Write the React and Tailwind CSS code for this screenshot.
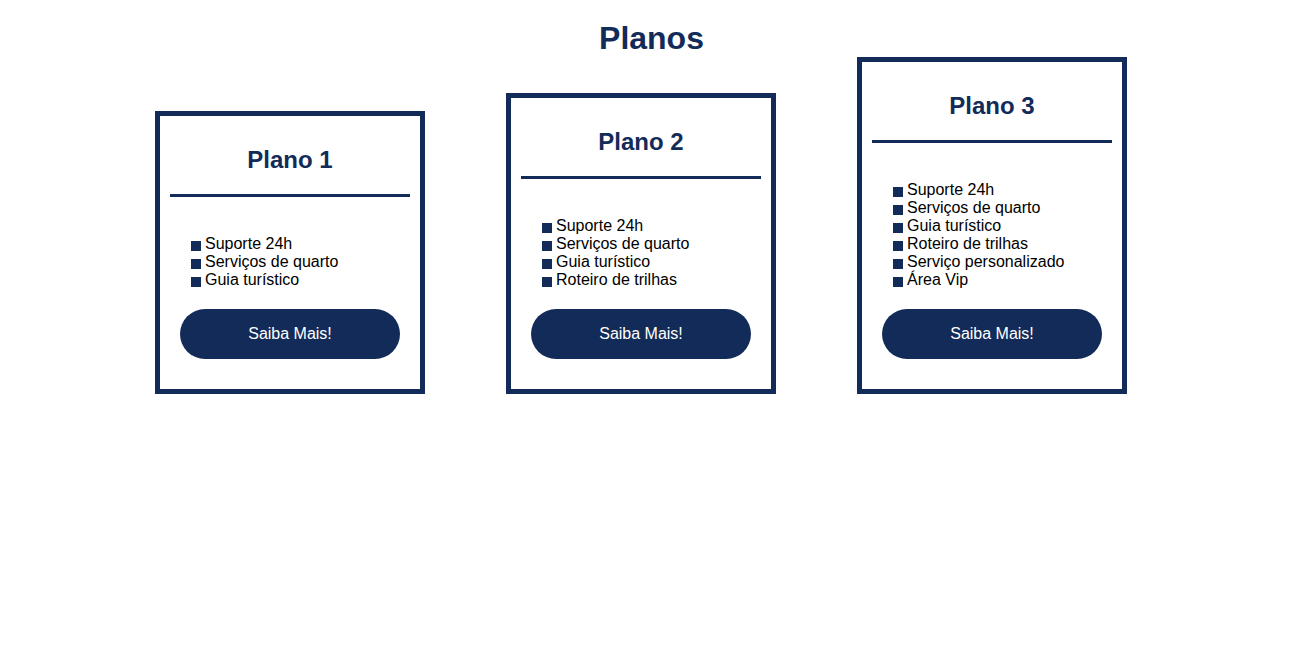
const plans = [
  { name: "Plano 1", items: ["Suporte 24h", "Serviços de quarto", "Guia turístico"] },
  {
    name: "Plano 2",
    items: ["Suporte 24h", "Serviços de quarto", "Guia turístico", "Roteiro de trilhas"],
  },
  {
    name: "Plano 3",
    items: [
      "Suporte 24h",
      "Serviços de quarto",
      "Guia turístico",
      "Roteiro de trilhas",
      "Serviço personalizado",
      "Área Vip",
    ],
  },
];

function PlanCard({ plan }) {
  return (
    <div className="w-[270px] border-[5px] border-[#132b58] bg-white px-[10px] pt-[30px] pb-[30px]">
      <h2 className="text-center text-[24px] leading-[28px] font-bold text-[#132b58]">
        {plan.name}
      </h2>
      <div className="mt-[20px] h-[3px] bg-[#132b58]" />

      <ul className="mt-[38px] pl-[21px]">
        {plan.items.map((item) => (
          <li key={item} className="flex text-[16px] leading-[18px] text-black">
            <span className="mt-[6px] mr-[4px] h-[10px] w-[10px] shrink-0 bg-[#132b58]" />
            {item}
          </li>
        ))}
      </ul>

      <button className="mx-[10px] mt-[20px] flex h-[50px] w-[220px] items-center justify-center rounded-full bg-[#132b58] text-[16px] text-white">
        Saiba Mais!
      </button>
    </div>
  );
}

export default function App() {
  return (
    <div className="min-h-screen bg-white font-['Liberation_Sans',Arial,sans-serif]">
      <h1 className="pt-[20px] pl-[6px] text-center text-[32px] leading-[36px] font-bold text-[#132b58]">
        Planos
      </h1>

      {/* Cards */}
      <div className="mt-[1px] flex items-end gap-[81px] pl-[155px]">
        {plans.map((plan) => (
          <PlanCard key={plan.name} plan={plan} />
        ))}
      </div>
    </div>
  );
}
